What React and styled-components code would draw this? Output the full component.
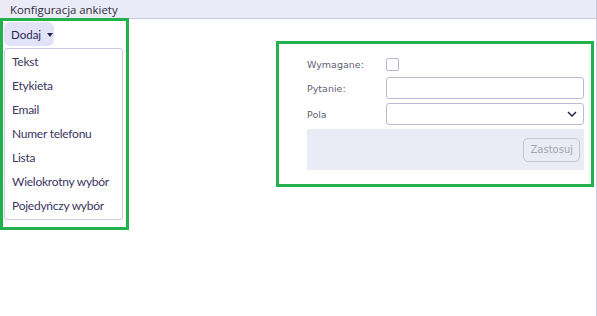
import React from "react"
import styled, { createGlobalStyle } from "styled-components"

const GlobalStyle = createGlobalStyle`
  html, body {
    margin: 0;
    padding: 0;
    background: #ffffff;
  }
  body {
    font-family: Lato, "Open Sans", sans-serif;
  }
`

const Page = styled.div`
  width: 597px;
  height: 316px;
  box-sizing: border-box;
  border-right: 1px solid #c9c9e3;
  overflow: hidden;
`

const Header = styled.div`
  height: 19px;
  box-sizing: border-box;
  padding: 2px 0 0 10px;
  background: #ebebf7;
  border-bottom: 1px solid #c9c9e3;
  font-family: "Open Sans", sans-serif;
  font-size: 11.4px;
  line-height: 15px;
  color: #2f2d3d;
`

const Body = styled.div`
  display: flex;
  align-items: flex-start;
  margin-top: -1px;
`

const Highlight = styled.div`
  border: 3px solid #22b14c;
  box-sizing: border-box;
  position: relative;
`

const LeftBox = styled(Highlight)`
  width: 129px;
  height: 212px;
  padding: 1px 0 0 1px;
`

const RightBox = styled(Highlight)`
  width: 318px;
  height: 146px;
  margin: 23px 0 0 147px;
  padding: 14px 6px 0 28px;
`

const AddButton = styled.button`
  display: flex;
  align-items: center;
  gap: 6px;
  width: 50px;
  height: 24px;
  padding: 0 0 0 7px;
  border: none;
  border-radius: 6px;
  background: #e3e3f8;
  color: #2a2550;
  font-family: inherit;
  font-size: 11.5px;
`

const Caret = styled.span`
  width: 0;
  height: 0;
  border-left: 3px solid transparent;
  border-right: 3px solid transparent;
  border-top: 4px solid #2a2550;
  margin-top: 1px;
`

const Menu = styled.ul`
  list-style: none;
  margin: 2px 0 0 0;
  padding: 1px 0 1px;
  width: 119px;
  box-sizing: border-box;
  border: 1px solid #c9c9e3;
  border-radius: 3px;
`

const MenuItem = styled.li`
  height: 24px;
  line-height: 24px;
  padding-left: 7px;
  font-size: 12px;
  letter-spacing: -0.25px;
  color: #3b3561;
  white-space: nowrap;
`

const Row = styled.div`
  display: grid;
  grid-template-columns: 79px 198px;
  align-items: center;
  height: ${p => p.$h}px;
  margin-bottom: ${p => p.$gap}px;
`

const Label = styled.span`
  font-family: "DejaVu Sans", Verdana, sans-serif;
  font-size: 9.5px;
  color: #625f75;
`

const Checkbox = styled.span`
  width: 13px;
  height: 13px;
  box-sizing: border-box;
  border: 1px solid #b7b5cc;
  border-radius: 2px;
`

const Input = styled.div`
  height: 22px;
  box-sizing: border-box;
  border: 1px solid #bcbad6;
  border-radius: 3px;
  background: #fff;
`

const Select = styled(Input)`
  display: flex;
  align-items: center;
  justify-content: flex-end;
  padding-right: 6px;
`

const ActionBar = styled.div`
  display: flex;
  justify-content: flex-end;
  align-items: center;
  width: 277px;
  height: 41px;
  background: #ebebf5;
  padding-right: 4px;
  box-sizing: border-box;
`

const ApplyButton = styled.button`
  height: 24px;
  padding: 0 6px;
  border: 1px solid #c3c3cf;
  border-radius: 5px;
  background: transparent;
  color: #a3a3ad;
  font-family: "DejaVu Sans", Verdana, sans-serif;
  font-size: 10px;
`

const items = [
  "Tekst",
  "Etykieta",
  "Email",
  "Numer telefonu",
  "Lista",
  "Wielokrotny wybór",
  "Pojedyńczy wybór",
]

const App = () => {
  return (
    <>
      <GlobalStyle />
      <Page>
        <Header>Konfiguracja ankiety</Header>
        <Body>
          <LeftBox>
            <AddButton>
              Dodaj <Caret />
            </AddButton>
            <Menu>
              {items.map(item => (
                <MenuItem key={item}>{item}</MenuItem>
              ))}
            </Menu>
          </LeftBox>
          <RightBox>
            <Row $h={13} $gap={6}>
              <Label>Wymagane:</Label>
              <Checkbox />
            </Row>
            <Row $h={22} $gap={4}>
              <Label>Pytanie:</Label>
              <Input />
            </Row>
            <Row $h={22} $gap={4}>
              <Label>Pola</Label>
              <Select>
                <svg width="10" height="6" viewBox="0 0 10 6">
                  <path d="M1 1l4 4 4-4" fill="none" stroke="#2a2550" strokeWidth="1.5" />
                </svg>
              </Select>
            </Row>
            <ActionBar>
              <ApplyButton>Zastosuj</ApplyButton>
            </ActionBar>
          </RightBox>
        </Body>
      </Page>
    </>
  )
}

export default App
